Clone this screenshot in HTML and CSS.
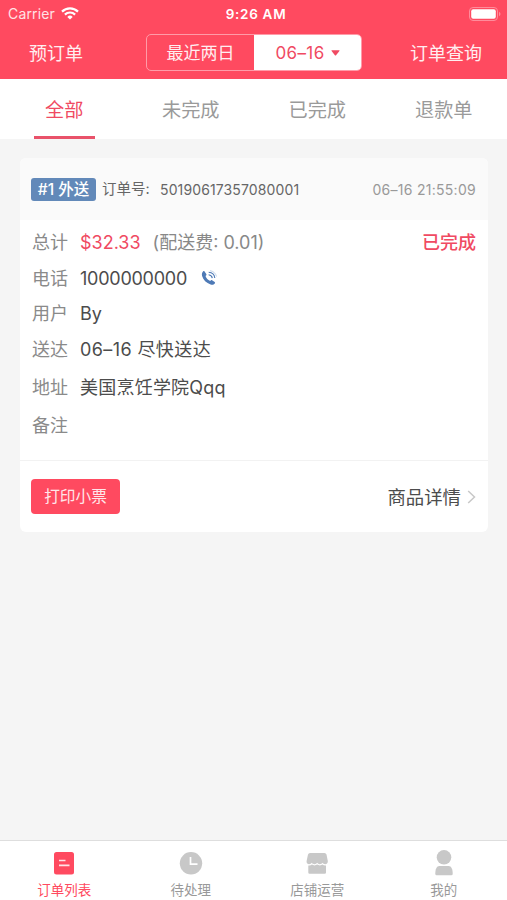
FILE: index.html
```html
<!DOCTYPE html>
<html lang="zh-CN">
<head>
<meta charset="utf-8">
<title>订单列表</title>
<link rel="stylesheet" href="styles.css">
</head>
<body>
<header class="top">
  <div class="status">
    <div class="carrier"><span class="carrier-name">Carrier</span>
      <svg width="18" height="13" viewBox="0 0 18 13" fill="none" stroke="#fff" stroke-width="2.2"><path d="M1 4.6a11.4 11.4 0 0 1 16 0M3.9 7.6a7.3 7.3 0 0 1 10.2 0"/><path d="M9 12.6 6.3 9.9a3.9 3.9 0 0 1 5.4 0z" fill="#fff" stroke="none"/></svg>
    </div>
    <span class="clock">9:26 AM</span>
    <svg class="battery" width="32" height="14" viewBox="0 0 32 14"><rect x=".5" y=".5" width="28" height="13" rx="3.5" fill="none" stroke="#ff8c9b"/><rect x="2.2" y="2.2" width="24.6" height="9.6" rx="2" fill="#fff"/><path d="M30 4.8c2 .8 2 3.6 0 4.4z" fill="#ff8c9b"/></svg>
  </div>
  <nav class="nav">
    <span class="nav-left">预订单</span>
    <div class="segment">
      <span class="seg">最近两日</span>
      <span class="seg seg-on"><span class="seg-date">06–16</span><svg width="9" height="6" viewBox="0 0 9 6"><path d="M.8.3h7.4q.6 0 .2.6L5.1 5.2q-.6.7-1.2 0L.6.9Q.2.3.8.3z" fill="#f04a62"/></svg></span>
    </div>
    <span class="nav-right">订单查询</span>
  </nav>
</header>
<div class="filters">
  <span class="filter filter-on">全部</span>
  <span class="filter">未完成</span>
  <span class="filter">已完成</span>
  <span class="filter">退款单</span>
</div>
<main class="content">
  <article class="card">
    <div class="card-head">
      <span class="badge">#1 外送</span>
      <span class="order-label">订单号:</span>
      <span class="order-no">50190617357080001</span>
      <span class="time">06–16 21:55:09</span>
    </div>
    <div class="rows">
      <div class="row"><span class="label">总计</span><span class="price">$32.33</span><span class="fee">(配送费: 0.01)</span><span class="state">已完成</span></div>
      <div class="row"><span class="label">电话</span><span class="phone">1000000000</span>
        <svg class="call" width="17" height="16" viewBox="0 0 17 16" fill="none"><path d="M3.4 1.2 5.3 3.9c.4.6.2 1.1-.8 2 .8 2.3 2.3 4 4.7 5 .8-.9 1.3-1.1 1.9-.7l2.6 1.9c.5.4.5.9.1 1.4-1 1.2-2.5 1.6-4.2 1C5.300 13 2.200 9.900 1.100 6 .6 4.100 1 2.400 2.200 1.200c.4-.4.9-.4 1.200 0z" fill="#4e7ab6"/><path d="M7.600 4.700c2 .2 3.400 1.400 3.700 3.500M7.700 2.300c3.300.1 5.700 2.300 6.100 5.700" stroke="#4e7ab6" stroke-width="1.100"/><path d="M9 .7c3.300.3 5.800 2.600 6.500 5.800" stroke="#a9c0dd" stroke-width=".7"/></svg>
      </div>
      <div class="row"><span class="label">用户</span><span>By</span></div>
      <div class="row"><span class="label">送达</span><span class="arrive">06–16 尽快送达</span></div>
      <div class="row row-tall"><span class="label">地址</span><span class="address">美国烹饪学院Qqq</span></div>
      <div class="row row-tall"><span class="label">备注</span></div>
    </div>
    <div class="card-foot">
      <span class="print">打印小票</span>
      <span class="detail">商品详情<svg width="9" height="14" viewBox="0 0 9 14" fill="none" stroke="#c8c8c8" stroke-width="1.500"><path d="m1.200 1 6.300 6-6.300 6"/></svg></span>
    </div>
  </article>
</main>
<footer class="tabs">
  <div class="tab tab-on">
    <svg width="26" height="28" viewBox="0 0 26 28"><rect x="3" y="3" width="20" height="22.500" rx="2.500" fill="#ff4a60"/><path d="M8 11.500h6.500M8 16.300h10.500" stroke="#ffe3e6" stroke-width="1.700"/></svg>
    <span>订单列表</span>
  </div>
  <div class="tab">
    <svg width="26" height="28" viewBox="0 0 26 28"><circle cx="13" cy="14.300" r="11.200" fill="#c8c8c8"/><path d="M12.500 8v7.200h7" fill="none" stroke="#fff" stroke-width="1.700"/></svg>
    <span>待处理</span>
  </div>
  <div class="tab">
    <svg width="26" height="28" viewBox="0 0 26 28" fill="#c8c8c8"><path d="M6 4h14.500q1.500 0 2 1.500l1.300 6.500c.3 2-1 3.200-2.500 3.200-1.400 0-2.300-.6-2.800-1.400-.7 1-1.600 1.400-2.700 1.400-1.200 0-2-.5-2.600-1.400-.6.900-1.500 1.400-2.700 1.400-1.100 0-2-.4-2.700-1.400-.6.9-1.500 1.400-2.700 1.400-1.600 0-2.900-1.200-2.500-3.200L4 5.500Q4.500 4 6 4z"/><path d="M4.300 16.400c1.500.2 2.700-.1 3.600-.8 1.500 1.100 3.700 1.100 5.300 0 1.500 1.100 3.800 1.100 5.300 0 1 .7 2.100 1 3.500.8v7.100q0 1.200-1.200 1.200H5.500q-1.200 0-1.200-1.200z"/></svg>
    <span>店铺运营</span>
  </div>
  <div class="tab">
    <svg width="26" height="28" viewBox="0 0 26 28" fill="#c8c8c8"><circle cx="13" cy="8.300" r="7.300"/><path d="M8.300 17h9.400c2.600 0 4 3.200 4 7.700q0 1.500-1.300 1.500H5.600q-1.300 0-1.300-1.500c0-4.500 1.400-7.700 4-7.700z"/></svg>
    <span>我的</span>
  </div>
</footer>
</body>
</html>
```
FILE: styles.css
```css
* { box-sizing: border-box; }
body {
  margin: 0;
  height: 900px;
  display: flex;
  flex-direction: column;
  overflow: hidden;
  background: #f5f5f5;
  font-family: Inter, "Noto Sans CJK SC", sans-serif;
  font-size: 18px;
  color: #4c4c4c;
  white-space: nowrap;
}
svg { display: block; flex: none; }
.top { height: 79px; background: #ff4a60; color: #fff; }
.status {
  height: 27px;
  padding: 0 6px 0 8px;
  display: grid;
  grid-template-columns: 1fr auto 1fr;
  align-items: center;
  line-height: 26px;
}
.carrier { display: flex; align-items: center; gap: 6px; font-size: 14px; letter-spacing: .15px; color: #ffe2e5; }
.clock { padding-left: 3px; font-size: 13.500px; font-weight: 600; letter-spacing: .7px; }
.battery { justify-self: end; }
.nav {
  height: 52px;
  padding: 0 25px 0 29px;
  display: grid;
  grid-template-columns: 117px 216px 1fr;
  align-items: center;
  line-height: 38px;
  color: #ffeef0;
}
.nav-left, .nav-right { padding-top: 1px; }
.nav-right { justify-self: end; }
.segment {
  height: 37px;
  margin-top: -1px;
  display: flex;
  border: 1px solid #ff9ba8;
  border-radius: 5px;
  overflow: hidden;
}
.seg {
  flex: 1;
  display: flex;
  align-items: center;
  justify-content: center;
  gap: 6px;
  font-size: 17px;
}
.seg-on { background: #fff; color: #f04a62; }
.seg-date { letter-spacing: .4px; }
.filters { height: 60px; display: flex; background: #fff; padding-left: 1px; }
.filter {
  flex: 1;
  display: flex;
  flex-direction: column;
  align-items: center;
  height: 60px;
  line-height: 62px;
  font-size: 19.200px;
  color: #9a9a9a;
}
.filter-on { color: #f04a62; }
.filter-on::after { content: ""; width: 61px; height: 3px; margin-top: -5px; background: #e9526a; flex: none; }
.content { flex: 1; padding: 19px 19px 0 20px; }
.card { height: 374px; border-radius: 6px; background: #fff; overflow: hidden; }
.card-head {
  height: 62px;
  padding: 0 12px 0 11px;
  display: flex;
  align-items: center;
  background: #fafafa;
  font-size: 14px;
  color: #666;
}
.badge {
  width: 65px;
  height: 23px;
  margin-right: 6px;
  border-radius: 3px;
  background: #6289b9;
  color: #fff;
  font-size: 15.500px;
  font-weight: 500;
  line-height: 24px;
  text-align: center;
}
.order-label { width: 58px; line-height: 18px; font-size: 14.500px; }
.order-no { letter-spacing: .12px; }
.time { margin-left: auto; letter-spacing: .28px; color: #999; }
.rows { height: 241px; padding: 5px 12px 0; border-bottom: 1px solid #f2f2f2; }
.row { height: 35.500px; display: flex; align-items: center; line-height: 35px; }
.row-tall { height: 38px; padding-top: 2px; }
.label { width: 48px; color: #8a8a8a; }
.price { color: #f04a62; }
.fee { margin-left: 12px; color: #888; }
.state { margin-left: auto; color: #f04a62; font-weight: 500; }
.phone { letter-spacing: -.25px; }
.arrive { letter-spacing: .4px; }
.address { letter-spacing: .22px; }
.call { margin-left: 14px; }
.card-foot {
  height: 71px;
  padding: 0 12px 0 11px;
  display: flex;
  align-items: center;
  justify-content: space-between;
}
.print {
  width: 89px;
  height: 35px;
  border-radius: 4px;
  background: #ff4a60;
  color: #ffe6e9;
  font-size: 15.700px;
  line-height: 36px;
  text-align: center;
}
.detail { display: flex; align-items: center; gap: 6px; line-height: 24px; font-size: 18.400px; }
.tabs { height: 60px; display: flex; background: #fff; border-top: 1px solid #dedede; padding-left: 1px; }
.tab {
  flex: 1;
  display: flex;
  flex-direction: column;
  align-items: center;
  padding-top: 8px;
  font-size: 13.500px;
  line-height: 26px;
  color: #999;
}
.tab-on { color: #ff4a60; }
```
